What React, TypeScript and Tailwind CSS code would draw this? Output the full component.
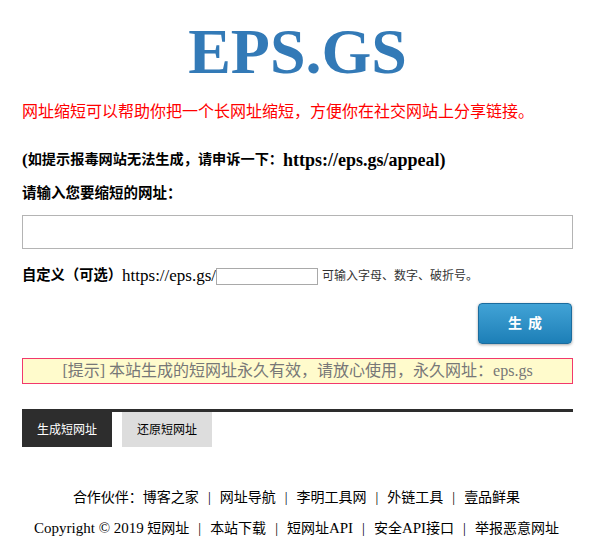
import React from "react";

const serif = "font-['Liberation_Serif','Noto_Sans_CJK_SC',serif]";

function Sep() {
  return <span className="mx-[9px]">|</span>;
}

export default function App() {
  return (
    <div className={`min-h-[550px] w-[593px] bg-white text-black ${serif}`}>
      <div className="mx-[22px] w-[551px]">
        {/* Logo */}
        <h1 className="pt-[20px] text-center text-[64px] font-bold leading-[64px] text-[#337ab7]">
          EPS.GS
        </h1>

        <p className="mt-[16px] text-[16px] leading-[24px] text-[#ff0000]">
          网址缩短可以帮助你把一个长网址缩短，方便你在社交网站上分享链接。
        </p>

        <p className="mt-[25px] flex h-[22px] items-center text-[14.2px] font-bold">
          <span className="text-[17px]">(</span>如提示报毒网站无法生成，请申诉一下：
          <span className="text-[18px]">https://eps.gs/appeal)</span>
        </p>

        <p className="mt-[11px] text-[14.5px] font-bold leading-[22px]">请输入您要缩短的网址：</p>

        <input
          type="text"
          className="mt-[11px] block h-[34px] w-full border border-[#b4b4b4] bg-white px-2 outline-none"
        />

        {/* Custom alias */}
        <div className="mt-[15px] flex h-[24px] items-center text-[14.3px]">
          <span className="font-bold">自定义（可选）</span>
          <span className="text-[17px]">https://eps.gs/</span>
          <input
            type="text"
            className="h-[17px] w-[102px] border border-[#a9a9a9] bg-white outline-none"
          />
          <span className="ml-[4px] text-[12px] text-[#333]">可输入字母、数字、破折号。</span>
        </div>

        {/* Submit */}
        <div className="mt-[15px] flex justify-end pr-px">
          <button className="h-[41px] w-[94px] rounded-[4px] border border-[#1b6c9e] bg-gradient-to-b from-[#41a3d6] to-[#1c7fb7] text-[14px] font-bold tracking-[6px] text-white shadow-[0_1px_3px_rgba(0,0,0,0.35)]">
            <span className="pl-[6px]">生成</span>
          </button>
        </div>

        {/* Notice */}
        <div className="mt-[14px] flex h-[26px] items-center justify-center border border-[#f2386c] bg-[#fffbcc] text-[16px] text-[#777]">
          [提示] 本站生成的短网址永久有效，请放心使用，永久网址：eps.gs
        </div>

        {/* Tabs */}
        <div className="mt-[25px] border-t-[3px] border-[#2d2d2d]">
          <div className="flex gap-[10px] text-[12px]">
            <div className="flex h-[35px] w-[90px] items-center justify-center bg-[#2d2d2d] text-white">
              生成短网址
            </div>
            <div className="flex h-[35px] w-[90px] items-center justify-center bg-[#dddddd] text-black">
              还原短网址
            </div>
          </div>
        </div>
      </div>

      {/* Footer */}
      <div className="mt-[35px] text-center text-[14px] leading-[31px]">
        <p>
          合作伙伴：博客之家
          <Sep />
          网址导航
          <Sep />
          李明工具网
          <Sep />
          外链工具
          <Sep />
          壹品鲜果
        </p>
        <p>
          <span className="text-[15px]">Copyright © 2019</span> 短网址
          <Sep />
          本站下载
          <Sep />
          短网址<span className="text-[15px]">API</span>
          <Sep />
          安全<span className="text-[15px]">API</span>接口
          <Sep />
          举报恶意网址
        </p>
      </div>
    </div>
  );
}
